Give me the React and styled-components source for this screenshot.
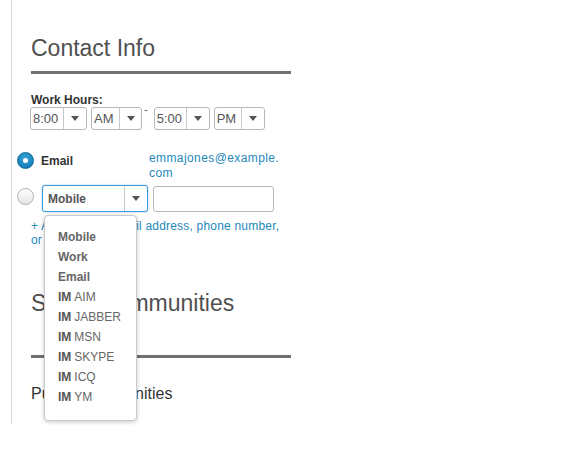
import React from 'react';
import styled, { createGlobalStyle } from 'styled-components';

const GlobalStyle = createGlobalStyle`
    html, body {
        margin: 0;
        padding: 0;
        background: #ffffff;
        font-family: "Liberation Sans", Arial, sans-serif;
    }
`;

const Page = styled.div`
    width: 576px;
    height: 449px;
    padding-left: 11px;
    box-sizing: border-box;
    overflow: hidden;
`;

const Panel = styled.div`
    width: 280px;
    border-left: 1px solid #d4d4d4;
    padding: 34px 0 21px 19px;
`;

const SectionTitle = styled.h2`
    margin: 0;
    margin-top: ${p => p.$top || 0}px;
    font-size: 23px;
    line-height: 28px;
    font-weight: 300;
    color: #505050;
`;

const Rule = styled.div`
    width: 260px;
    height: 3px;
    background: #707070;
    margin-top: ${p => p.$top}px;
`;

const FieldLabel = styled.div`
    margin-top: 19px;
    font-size: 12px;
    line-height: 14px;
    font-weight: bold;
    color: #333;
`;

const HoursRow = styled.div`
    display: flex;
    align-items: flex-start;
    gap: 4px;
    margin-left: -1px;
`;

const Dash = styled.span`
    font-size: 11px;
    line-height: 4px;
    color: #555;
    margin: 0 2px 0 -2px;
`;

const SelectBox = styled.div`
    position: relative;
    display: inline-flex;
    align-items: stretch;
    height: ${p => p.$h}px;
    box-sizing: border-box;
    border: 1px solid ${p => (p.$focus ? '#3d9ad6' : '#b8b8b8')};
    border-radius: 3px;
    background: #fff;
    box-shadow: ${p => (p.$focus ? '0 0 2px rgba(61,154,214,0.6)' : 'none')};
`;

const SelectValue = styled.span`
    width: ${p => p.$w}px;
    display: flex;
    align-items: center;
    padding-left: ${p => p.$pad || 2}px;
    box-sizing: border-box;
    font-size: ${p => (p.$bold ? 12 : 13)}px;
    font-weight: ${p => (p.$bold ? 'bold' : 'normal')};
    color: #555;
`;

const SelectArrow = styled.span`
    width: ${p => p.$w}px;
    border-left: 1px solid #c8c8c8;
    display: flex;
    align-items: center;
    justify-content: center;

    &::after {
        content: '';
        border-left: 4px solid transparent;
        border-right: 4px solid transparent;
        border-top: 5px solid #555;
    }
`;

const ContactRow = styled.div`
    display: flex;
    align-items: flex-start;
    margin-left: -14px;
    margin-top: ${p => p.$top}px;
`;

const Radio = styled.span`
    flex: none;
    width: 17px;
    height: 17px;
    box-sizing: border-box;
    border-radius: 50%;
    display: flex;
    align-items: center;
    justify-content: center;
    margin-top: ${p => p.$top}px;
    border: 1px solid ${p => (p.$checked ? '#0b6d9f' : '#b0b0b0')};
    background: ${p => (p.$checked
        ? 'radial-gradient(circle at 50% 35%, #3aa6dc, #0b73a8)'
        : 'linear-gradient(#ffffff, #e4e4e4)')};

    &::after {
        content: '';
        display: ${p => (p.$checked ? 'block' : 'none')};
        width: 5px;
        height: 5px;
        border-radius: 50%;
        background: #fff;
    }
`;

const TypeLabel = styled.span`
    width: 108px;
    margin-left: 7px;
    padding-top: 3px;
    font-size: 12px;
    font-weight: bold;
    color: #333;
`;

const Value = styled.a`
    width: 132px;
    font-size: 12px;
    line-height: 15px;
    letter-spacing: 0.4px;
    color: #2488ba;
    text-decoration: none;
`;

const Choice = styled.div`
    position: relative;
    margin-left: 8px;
`;

const TextInput = styled.input`
    width: 121px;
    height: 26px;
    box-sizing: border-box;
    margin: 1px 0 0 5px;
    border: 1px solid #b8b8b8;
    border-radius: 3px;
    outline: none;
`;

const AddLink = styled.a`
    display: block;
    width: 260px;
    margin-top: 7px;
    font-size: 12px;
    line-height: 14px;
    letter-spacing: 0.2px;
    color: #2488ba;
    text-decoration: none;
`;

const Menu = styled.ul`
    position: absolute;
    z-index: 5;
    left: 2px;
    top: calc(100% + 3px);
    width: 93px;
    margin: 0;
    padding: 11px 0 13px 13px;
    box-sizing: border-box;
    list-style: none;
    background: #fff;
    border: 1px solid #c9c9c9;
    border-radius: 4px;
    box-shadow: 0 1px 4px rgba(0, 0, 0, 0.22);
`;

const MenuItem = styled.li`
    font-size: 12px;
    line-height: 20px;
    color: #666;
    font-weight: ${p => (p.$bold ? 'bold' : 'normal')};
    white-space: nowrap;

    b {
        color: #555;
        margin-right: 3px;
    }
`;

const SubTitle = styled.div`
    margin-top: 26px;
    font-size: 16px;
    line-height: 19px;
    color: #333;
`;

const hours = [
    { value: '8:00', w: 32, a: 22 },
    { value: 'AM', w: 27, a: 21 },
];
const hoursEnd = [
    { value: '5:00', w: 31, a: 22 },
    { value: 'PM', w: 26, a: 22 },
];

const menuTypes = ['Mobile', 'Work', 'Email'];
const imTypes = ['AIM', 'JABBER', 'MSN', 'SKYPE', 'ICQ', 'YM'];

function Select({ item }) {
    return (
        <SelectBox $h={23}>
            <SelectValue $w={item.w}>{item.value}</SelectValue>
            <SelectArrow $w={item.a} />
        </SelectBox>
    );
}

export default function App() {
    return (
        <Page>
            <GlobalStyle />
            <Panel>
                <SectionTitle>Contact Info</SectionTitle>
                <Rule $top={9} />

                <FieldLabel>Work Hours:</FieldLabel>
                <HoursRow>
                    {hours.map(h => <Select key={h.value} item={h} />)}
                    <Dash>-</Dash>
                    {hoursEnd.map(h => <Select key={h.value} item={h} />)}
                </HoursRow>

                <ContactRow $top={21}>
                    <Radio $checked $top={1} />
                    <TypeLabel>Email</TypeLabel>
                    <Value>emmajones@example.<wbr />com</Value>
                </ContactRow>

                <ContactRow $top={4}>
                    <Radio $top={3} />
                    <Choice>
                        <SelectBox $h={27} $focus>
                            <SelectValue $w={81} $pad={5} $bold>Mobile</SelectValue>
                            <SelectArrow $w={22} />
                        </SelectBox>
                        <Menu>
                            {menuTypes.map(t => (
                                <MenuItem key={t} $bold>{t}</MenuItem>
                            ))}
                            {imTypes.map(t => (
                                <MenuItem key={t}><b>IM</b>{t}</MenuItem>
                            ))}
                        </Menu>
                    </Choice>
                    <TextInput type="text" />
                </ContactRow>

                <AddLink>+ Add another email address, phone number, or IM account</AddLink>

                <SectionTitle $top={42}>Social Communities</SectionTitle>
                <Rule $top={38} />

                <SubTitle>Public Communities</SubTitle>
            </Panel>
        </Page>
    );
}
